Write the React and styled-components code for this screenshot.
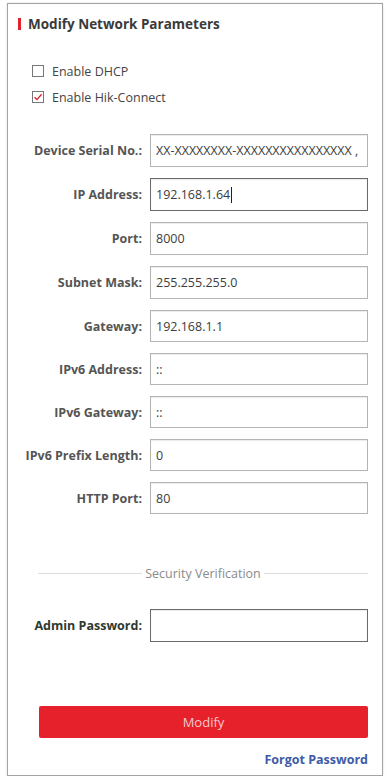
import React, { useState } from 'react';
import styled, { createGlobalStyle } from 'styled-components';

const Global = createGlobalStyle`
  html, body {
    margin: 0;
    padding: 0;
    background: #fff;
  }
  body {
    font-family: "Open Sans", "Liberation Sans", sans-serif;
  }
`;

const Panel = styled.div`
  box-sizing: border-box;
  margin: 3px 0 0 7px;
  width: 376px;
  height: 773px;
  border: 1px solid #a4a4a4;
  box-shadow: 0 0 2px rgba(0, 0, 0, 0.15);
  padding: 10px 14px 0 8px;
  display: flex;
  flex-direction: column;
`;

const Title = styled.h3`
  margin: 0 0 0 2px;
  display: flex;
  align-items: center;
  gap: 7px;
  font-size: 13.5px;
  font-weight: 700;
  color: #3a3a3a;
  height: 20px;
  &::before {
    content: '';
    width: 3px;
    height: 12px;
    background: #e3232c;
  }
`;

const Checks = styled.div`
  margin: 28px 0 0 16px;
  display: flex;
  flex-direction: column;
  gap: 8px;
`;

const CheckRow = styled.label`
  display: flex;
  align-items: center;
  gap: 8px;
  font-size: 12.5px;
  color: #444;
  height: 18px;
`;

const Box = styled.span`
  box-sizing: border-box;
  width: 12px;
  height: 12px;
  border: 1px solid #777;
  background: #fff;
  display: flex;
  align-items: center;
  justify-content: center;
`;

const Form = styled.div`
  margin-top: 28px;
  display: grid;
  grid-template-columns: 126px 1fr;
  column-gap: 8px;
  row-gap: 11px;
  align-items: center;
`;

const Label = styled.span`
  text-align: right;
  font-size: 12.5px;
  font-weight: 700;
  color: ${p => (p.dark ? '#2e3a2e' : '#555')};
  white-space: nowrap;
`;

const Field = styled.div`
  box-sizing: border-box;
  height: ${p => (p.short ? 32 : 33)}px;
  border: 1px solid ${p => (p.focus ? '#6a6a6a' : '#b4b4b4')};
  box-shadow: inset 0 1px 1px rgba(0, 0, 0, 0.08);
  padding: 0 5px;
  display: flex;
  align-items: center;
  font-size: 12.5px;
  color: #3c3c3c;
  overflow: hidden;
  white-space: nowrap;
`;

const Caret = styled.span`
  display: inline-block;
  width: 1px;
  height: 16px;
  background: #222;
  margin-left: 1px;
`;

const Divider = styled.div`
  margin: 51px 0 0 22px;
  display: flex;
  align-items: center;
  gap: 3px;
  font-size: 12.5px;
  color: #8a8a8a;
  &::before,
  &::after {
    content: '';
    flex: 1;
    height: 1px;
    background: #dcdcdc;
  }
`;

const PassGrid = styled(Form)`
  margin-top: 27px;
`;

const Button = styled.button`
  margin: 64px 0 0 23px;
  height: 32px;
  border: 0;
  border-radius: 2px;
  background: #e6212b;
  color: #f6c9cb;
  font-family: inherit;
  font-size: 13px;
  cursor: pointer;
`;

const Forgot = styled.a`
  align-self: flex-end;
  margin-top: 13px;
  font-size: 12.5px;
  font-weight: 700;
  color: #3d5ba6;
  text-decoration: none;
`;

const fields = [
  { label: 'Device Serial No.:', value: 'XX-XXXXXXXX-XXXXXXXXXXXXXXXX ,' },
  { label: 'IP Address:', value: '192.168.1.64', focus: true },
  { label: 'Port:', value: '8000' },
  { label: 'Subnet Mask:', value: '255.255.255.0' },
  { label: 'Gateway:', value: '192.168.1.1', short: true },
  { label: 'IPv6 Address:', value: '::', short: true },
  { label: 'IPv6 Gateway:', value: '::', short: true },
  { label: 'IPv6 Prefix Length:', value: '0', short: true },
  { label: 'HTTP Port:', value: '80', short: true },
];

function Check({ checked }) {
  return (
    <Box>
      {checked && (
        <svg width="10" height="10" viewBox="0 0 10 10">
          <path d="M1.5 5.2 L4 7.6 L8.6 2.2" fill="none" stroke="#d9262f" strokeWidth="1.4" />
        </svg>
      )}
    </Box>
  );
}

export default function App() {
  const [dhcp] = useState(false);
  const [hik] = useState(true);

  return (
    <>
      <Global />
      <Panel>
        <Title>Modify Network Parameters</Title>
        <Checks>
          <CheckRow>
            <Check checked={dhcp} />
            Enable DHCP
          </CheckRow>
          <CheckRow>
            <Check checked={hik} />
            Enable Hik-Connect
          </CheckRow>
        </Checks>
        <Form>
          {fields.map(f => (
            <React.Fragment key={f.label}>
              <Label>{f.label}</Label>
              <Field focus={f.focus} short={f.short}>
                {f.value}
                {f.focus && <Caret />}
              </Field>
            </React.Fragment>
          ))}
        </Form>
        <Divider>Security Verification</Divider>
        <PassGrid>
          <Label dark>Admin Password:</Label>
          <Field focus />
        </PassGrid>
        <Button>Modify</Button>
        <Forgot href="#">Forgot Password</Forgot>
      </Panel>
    </>
  );
}
